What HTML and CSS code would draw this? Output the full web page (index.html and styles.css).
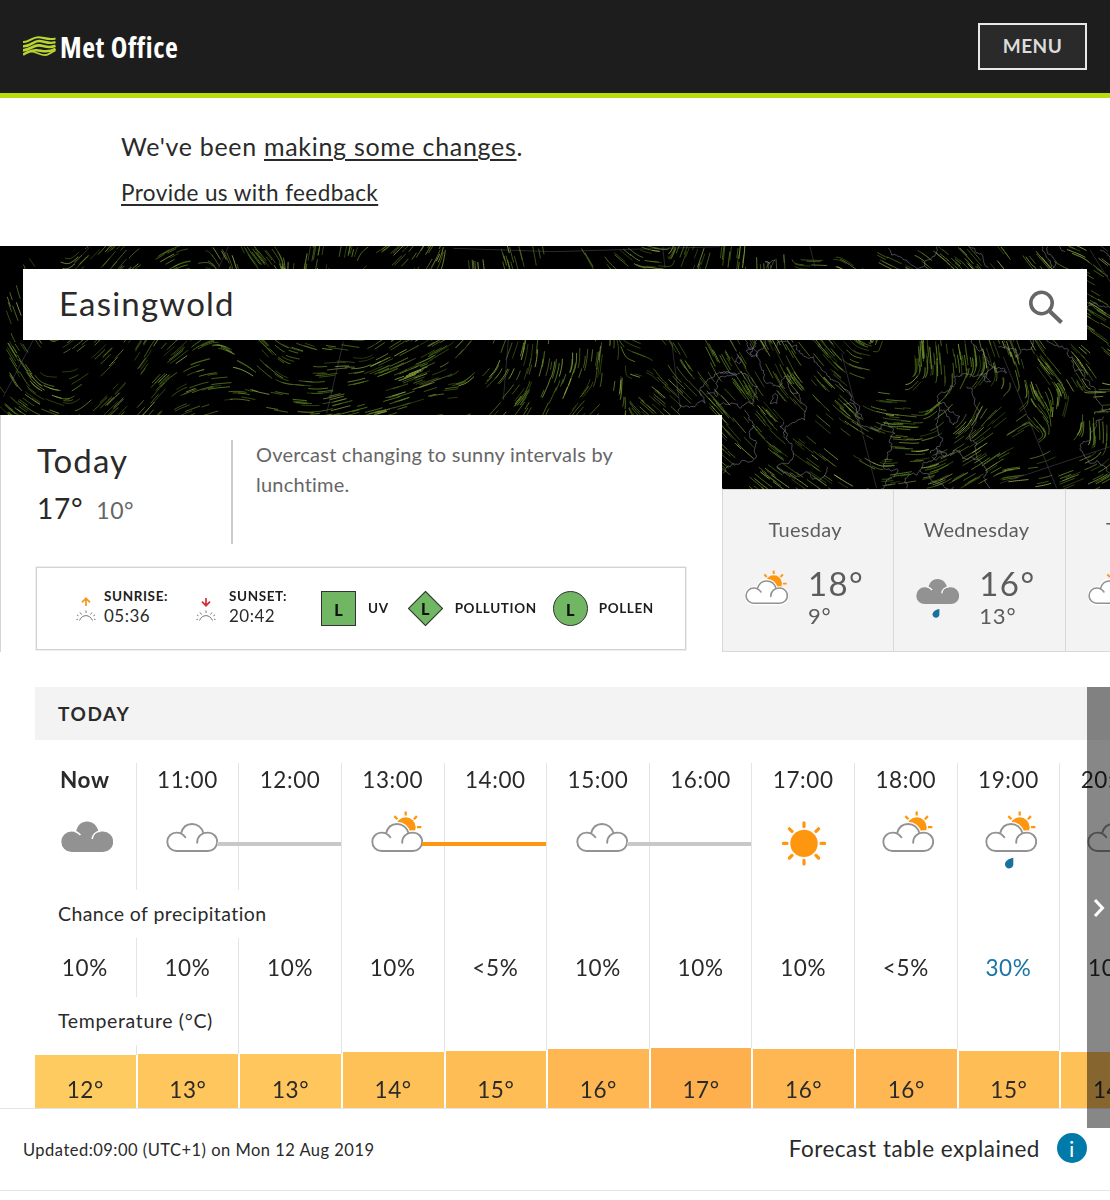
FILE: index.html
```html
<!DOCTYPE html>
<html lang="en">
<head>
<meta charset="utf-8">
<title>Easingwold weather - Met Office</title>
<link rel="stylesheet" href="styles.css">
</head>
<body>
<svg class="sprite" aria-hidden="true">
  <symbol id="cloud-outline" viewBox="0 0 52 60">
    <path fill="#fff" d="M10.5 40A9.2 9.2 0 0 1 10.5 21.6L15 22.6C16.5 16.5 20.5 13 26 13S36 16.5 37.5 22.3L42 21.6A9.2 9.2 0 0 1 42 40Z"/>
    <path fill="none" stroke="#929292" stroke-width="1.9" stroke-linecap="round" d="M19.3 26.3C17 23 14 21.6 10.5 21.6A9.2 9.2 0 0 0 10.5 40H42A9.2 9.2 0 0 0 42 21.6C35.5 21.6 31 25.5 31.2 31.8M15 22.6C16.5 16.5 20.5 13 26 13S36 16.5 37.5 22.3"/>
  </symbol>
  <symbol id="cloud-solid" viewBox="0 0 52 60">
    <path fill="#929292" d="M10.5 41A10.2 10.2 0 0 1 10.5 20.6L15 21C16.5 14 20.5 10.6 26 10.6S36 14 37.5 20.6L42 20.6A10.2 10.2 0 0 1 42 41Z"/>
    <path fill="none" stroke="#fff" stroke-width="1.5" d="M19.5 24C17 21.5 14.5 20.5 13.5 20.3M31.2 28C31.5 24 34.5 20.5 39.5 20.2"/>
  </symbol>
  <symbol id="sun-peek" viewBox="0 0 52 60">
    <circle cx="34.7" cy="16.2" r="10" fill="#ff960f"/>
    <path stroke="#ff960f" stroke-width="2.3" d="M34.7 4.6V.4M26.4 8.2L23.4 5.1M42.9 8.2L45.9 5.1M46 16.2H50.4"/>
    <path fill="#fff" stroke="#fff" stroke-width="4.6" d="M10.5 40A9.2 9.2 0 0 1 10.5 21.6L15 22.6C16.5 16.5 20.5 13 26 13S36 16.5 37.5 22.3L42 21.6A9.2 9.2 0 0 1 42 40Z"/>
    <use href="#cloud-outline" width="52" height="60"/>
  </symbol>
  <symbol id="drop" viewBox="0 0 52 60">
    <path fill="#1b719e" d="M28.3 46.8V53.3C28.3 56 26.4 57.4 24.3 57.4C21.8 57.4 20 55.6 20 53.2C20 50.2 23.5 47.6 28.3 46.8Z"/>
  </symbol>
  <symbol id="sun-full" viewBox="0 0 52 60">
    <circle cx="25" cy="32.4" r="13.7" fill="#ff960f"/>
    <path stroke="#ff960f" stroke-width="3.2" stroke-linecap="round" d="M25 15.400V11.800M25 49.400V53M8 32.400H4.400M42 32.400H45.600M13 20.400L10.400 17.800M37 20.400L39.600 17.800M13 44.400L10.400 47M37 44.400L39.600 47"/>
  </symbol>
  <symbol id="horizon" viewBox="0 0 20 12">
    <path fill="none" stroke="#777" stroke-width="1" d="M3.500 10.500C6 4 14 4 16.500 10.500M10 .5V3M4 2.500L5.500 4.500M16 2.500L14.500 4.500M1 5L2.500 5.800M19 5L17.500 5.800M.5 9.500L2 9.200M19.500 9.500L18 9.200"/>
  </symbol>
</svg>

<header class="topbar">
  <a class="logo">
    <svg width="33" height="21" viewBox="0 0 33 21" fill="none" stroke="#b9d532">
      <path stroke-width="2.100" d="M0 6C6 6.500 9 1.200 15 1.200S25 4.500 32.500 2.400"/>
      <path stroke-width="2.400" d="M0 10.200C8 10.700 10 4.800 16 5S25 8.400 32.500 6.200"/>
      <path stroke-width="2.600" d="M0 14.400C8 13.500 10 9 16 9.400S25 12.800 32.500 9.800"/>
      <path stroke-width="2.500" d="M0 18.800C4 15.500 8 14.600 13 14.200S23 18 32.500 12.800"/>
      <path stroke-width="1.700" d="M8 15.500C13 15.500 18 19.600 22 19.200S28 16 32.500 14.500"/>
    </svg>
    <span>Met Office</span>
  </a>
  <button class="menu">MENU</button>
</header>

<section class="notice">
  <p class="changes">We've been <a>making some changes</a>.</p>
  <p class="feedback"><a>Provide us with feedback</a></p>
</section>

<section class="hero">
  <canvas class="wind" id="wind" width="1110" height="244"></canvas>
  <div class="search">
    <span>Easingwold</span>
    <svg width="36" height="36" viewBox="0 0 36 36" fill="none" stroke="#666"><circle cx="14.500" cy="14" r="10.700" stroke-width="3.600"/><path stroke-width="4.200" d="M23 22.500L34.500 33.500"/></svg>
  </div>
  <div class="days">
    <article class="today">
      <div class="summary">
        <div class="headline">
          <h2>Today</h2>
          <p><span class="high">17°</span><span class="low">10°</span></p>
        </div>
        <p class="description">Overcast changing to sunny intervals by lunchtime.</p>
      </div>
      <div class="facts">
        <div class="sun rise">
          <svg width="20" height="26" viewBox="0 0 20 26"><path fill="none" stroke="#f39a1c" stroke-width="1.700" d="M10 10V2.500M6 6.300L10 2.300L14 6.300"/><use href="#horizon" y="14" width="20" height="12"/></svg>
          <p><b>SUNRISE:</b><span>05:36</span></p>
        </div>
        <div class="sun set">
          <svg width="20" height="26" viewBox="0 0 20 26"><path fill="none" stroke="#d13239" stroke-width="1.700" d="M10 2V9.500M6 5.700L10 9.700L14 5.700"/><use href="#horizon" y="14" width="20" height="12"/></svg>
          <p><b>SUNSET:</b><span>20:42</span></p>
        </div>
        <div class="level uv"><i class="badge square"><em>L</em></i><b>UV</b></div>
        <div class="level pollution"><i class="badge diamond"><em>L</em></i><b>POLLUTION</b></div>
        <div class="level pollen"><i class="badge circle"><em>L</em></i><b>POLLEN</b></div>
      </div>
    </article>
    <article class="day">
      <h3>Tuesday</h3>
      <div class="outlook">
        <svg width="43" height="50" viewBox="0 0 52 60"><use href="#sun-peek"/></svg>
        <p><span class="high">18°</span><span class="low">9°</span></p>
      </div>
    </article>
    <article class="day">
      <h3>Wednesday</h3>
      <div class="outlook">
        <svg width="43" height="50" viewBox="0 0 52 60"><use href="#cloud-solid"/><use href="#drop"/></svg>
        <p><span class="high">16°</span><span class="low">13°</span></p>
      </div>
    </article>
    <article class="day">
      <h3>Thursday</h3>
      <div class="outlook">
        <svg width="43" height="50" viewBox="0 0 52 60"><use href="#sun-peek"/></svg>
      </div>
    </article>
  </div>
</section>

<section class="forecast">
  <h2 class="table-title">TODAY</h2>
  <div class="hours">
    <h4 class="label precip">Chance of precipitation</h4>
    <h4 class="label temp">Temperature (°C)</h4>
    <div class="hour"><time class="now">Now</time><div class="icon"><svg><use href="#cloud-solid"/></svg></div><span class="chance">10%</span><div class="bar c12">12°</div></div>
    <div class="hour"><time>11:00</time><div class="icon linked"><svg><use href="#cloud-outline"/></svg><i class="link"></i></div><span class="chance">10%</span><div class="bar c13">13°</div></div>
    <div class="hour"><time>12:00</time><div class="icon tail"><i class="link"></i></div><span class="chance">10%</span><div class="bar c13">13°</div></div>
    <div class="hour"><time>13:00</time><div class="icon linked"><svg><use href="#sun-peek"/></svg><i class="link warm"></i></div><span class="chance">10%</span><div class="bar c14">14°</div></div>
    <div class="hour"><time>14:00</time><div class="icon tail"><i class="link warm"></i></div><span class="chance">&lt;5%</span><div class="bar c15">15°</div></div>
    <div class="hour"><time>15:00</time><div class="icon linked"><svg><use href="#cloud-outline"/></svg><i class="link"></i></div><span class="chance">10%</span><div class="bar c16">16°</div></div>
    <div class="hour"><time>16:00</time><div class="icon tail"><i class="link"></i></div><span class="chance">10%</span><div class="bar c17">17°</div></div>
    <div class="hour"><time>17:00</time><div class="icon"><svg><use href="#sun-full"/></svg></div><span class="chance">10%</span><div class="bar c16">16°</div></div>
    <div class="hour"><time>18:00</time><div class="icon"><svg><use href="#sun-peek"/></svg></div><span class="chance">&lt;5%</span><div class="bar c16">16°</div></div>
    <div class="hour"><time>19:00</time><div class="icon"><svg><use href="#sun-peek"/><use href="#drop"/></svg></div><span class="chance likely">30%</span><div class="bar c15">15°</div></div>
    <div class="hour"><time>20:00</time><div class="icon"><svg><use href="#cloud-outline"/></svg></div><span class="chance">10%</span><div class="bar c14">14°</div></div>
  </div>
  <button class="next" aria-label="Later hours"><svg width="14" height="20" viewBox="0 0 14 20"><path fill="none" stroke="#fff" stroke-width="3" d="M3 2L10.500 10L3 18"/></svg></button>
</section>

<footer class="status">
  <p class="updated">Updated:09:00 (UTC+1) on Mon 12 Aug 2019</p>
  <a class="explained">Forecast table explained <i>i</i></a>
</footer>
<script src="wind.js"></script>
</body>
</html>
```
FILE: styles.css
```css
* { box-sizing: border-box; margin: 0; padding: 0; }
body { width: 1110px; height: 1200px; overflow: hidden; background: #fff; color: #2a2a2a; font-family: Lato, "Open Sans", sans-serif; font-variant-ligatures: none; }
.sprite { position: absolute; width: 0; height: 0; }
i, em { font-style: normal; }

.topbar { display: flex; justify-content: space-between; align-items: center; height: 98px; padding: 0 23px; background: #1d1d1d; border-bottom: 5px solid #b9dc0c; }
.logo { display: flex; align-items: center; gap: 4px; color: #fff; font: 700 28px/40px "Open Sans", sans-serif; font-stretch: 75%; letter-spacing: .6px; }
.menu { width: 109px; height: 47px; border: 2px solid #e8e8e8; background: #2a2a2a; color: #dcdcdc; font: 700 19px/1 Lato, sans-serif; letter-spacing: .5px; padding-bottom: 3px; }

.notice { height: 148px; padding: 31px 121px 0; }
.notice a { text-decoration: underline; text-decoration-thickness: 1.500px; text-underline-offset: 3px; text-decoration-skip-ink: auto; }
.changes { font-size: 25px; line-height: 35px; letter-spacing: .7px; }
.feedback { font-size: 22.500px; line-height: 36px; letter-spacing: .4px; margin-top: 11px; }

.hero { position: relative; height: 406px; padding: 23px 0 0; }
.wind { position: absolute; left: 0; top: 0; }
.search { position: relative; display: flex; justify-content: space-between; margin: 0 23px; height: 71px; padding: 0 24px 0 36px; background: #fff; font-size: 33px; line-height: 68px; letter-spacing: 1.2px; }
.search svg { margin-top: 20px; }
.days { position: relative; display: flex; align-items: flex-end; width: 1110px; margin-top: 75px; overflow: hidden; }
.today { flex: none; width: 722px; height: 237px; padding: 25px 36px 0 35px; background: #fff; border-left: 1px solid #d5d5d5; }
.summary { display: flex; height: 104px; }
.headline { width: 197px; border-right: 2px solid #ccc; padding-left: 1px; }
.headline h2 { font-size: 33px; line-height: 41px; font-weight: 400; letter-spacing: 1.1px; }
.headline p { display: flex; align-items: baseline; gap: 13px; line-height: 54px; }
.headline .high { font-size: 28px; letter-spacing: .7px; }
.headline .low { font-size: 23px; letter-spacing: .6px; color: #666; }
.description { width: 400px; padding: 0 0 0 23px; margin-top: -1px; font-size: 20px; line-height: 30px; letter-spacing: .22px; color: #666; }
.facts { display: flex; align-items: center; height: 83px; margin-top: 23px; border: 1px solid #d3d3d3; font-size: 13.500px; line-height: 19px; box-shadow: 0 0 0 .5px #ddd; }
.facts b { font-weight: 700; letter-spacing: .62px; color: #1d1d1d; }
.sun { display: flex; align-items: center; gap: 8px; }
.sun p { display: flex; flex-direction: column; margin-top: -5px; }
.sun p span { font-size: 17px; letter-spacing: .5px; }
.rise { width: 120px; margin-left: 39px; }
.set { width: 125px; gap: 13px; }
.level { display: flex; align-items: center; gap: 12px; }
.badge { display: grid; place-items: center; width: 35px; height: 35px; background: #70b663; border: 1px solid #333; }
.badge em { font: 700 16px/20px "Open Sans", sans-serif; color: #111; padding-top: 2px; }
.diamond { width: 25px; height: 25px; margin: 0 5px; transform: rotate(45deg); }
.diamond em { transform: rotate(-45deg); padding-top: 0; }
.circle { border-radius: 50%; }
.pollution { margin-left: 19px; }
.pollen { margin-left: 16px; gap: 11px; }

.day { flex: none; width: 171.300px; height: 163px; background: #f3f3f3; border: solid #d8d8d8; border-width: 1px 0 1px 1px; color: #5c5c5c; }
.day h3 { margin-top: 23px; padding-right: 6px; font-size: 20px; line-height: 32px; font-weight: 400; text-align: center; letter-spacing: .3px; }
.outlook { display: flex; gap: 21px; padding-left: 22px; height: 70px; margin-top: 13px; }
.outlook svg { margin-top: 12px; flex: none; }
.outlook p { display: flex; flex-direction: column; }
.outlook .high { font-size: 33px; line-height: 50px; letter-spacing: 1.4px; margin-left: -1px; }
.outlook .low { font-size: 22px; line-height: 22px; letter-spacing: .8px; margin: -3px 0 0 -1px; }

.forecast { position: relative; padding: 35px 0 0 34px; height: 457px; border-bottom: 1px solid #e4e4e4; }
.table-title { margin-left: 1px; height: 53px; padding-left: 23px; background: #f3f3f3; font-size: 19px; line-height: 53px; font-weight: 700; letter-spacing: 1.600px; }
.hours { display: grid; grid-template-columns: repeat(11, 102.640px); grid-template-rows: 127px 48px 59px 48px 63px; width: 1076px; margin-top: 23px; overflow: hidden; }
.hour { grid-row: 1 / 6; display: grid; grid-template-rows: subgrid; grid-template-columns: 100%; border-right: 1px solid #e4e4e4; text-align: center; font-size: 22.500px; letter-spacing: .6px; }
.hour > * { grid-column: 1; }
.hour:nth-of-type(1) { grid-column: 1; }
.hour:nth-of-type(2) { grid-column: 2; }
.hour:nth-of-type(3) { grid-column: 3; }
.hour:nth-of-type(4) { grid-column: 4; }
.hour:nth-of-type(5) { grid-column: 5; }
.hour:nth-of-type(6) { grid-column: 6; }
.hour:nth-of-type(7) { grid-column: 7; }
.hour:nth-of-type(8) { grid-column: 8; }
.hour:nth-of-type(9) { grid-column: 9; }
.hour:nth-of-type(10) { grid-column: 10; }
.hour:nth-of-type(11) { grid-column: 11; }
.hour time { grid-row: 1; line-height: 34px; }
.hour .now { font-weight: 700; }
.icon { grid-row: 1; display: flex; margin-top: 48px; padding-left: 27px; height: 60px; }
.icon.linked { padding-left: 29px; }
.icon.tail { padding-left: 0; }
.icon svg { flex: none; width: 52px; height: 60px; overflow: visible; }
.link { flex: 1; height: 4px; margin: 30.500px -2px 0 -1px; background: #c8c8c8; position: relative; }
.tail .link { margin-left: 0; margin-right: 0; }
.link.warm { background: #ff960f; }
.chance { grid-row: 3; line-height: 60px; }
.likely { color: #1b74a5; }
.label { z-index: 1; background: #fff; padding-left: 24px; font-size: 19.500px; line-height: 47px; font-weight: 400; letter-spacing: .42px; white-space: nowrap; }
.precip { grid-area: 2 / 1 / 3 / 4; margin-right: 2px; }
.temp { grid-area: 4 / 1 / 5 / 3; margin-right: 2px; letter-spacing: .65px; }
.bar { grid-row: 5; align-self: end; margin: 0 -1px 0 0; border: solid #fff; border-width: 0 1px 0 1px; line-height: 37px; display: flex; align-items: flex-end; justify-content: center; }
.c12 { height: 53px; background: #fecb60; }
.c13 { height: 54px; background: #fec65c; }
.c14 { height: 56px; background: #fec158; }
.c15 { height: 57px; background: #febd55; }
.c16 { height: 59px; background: #feb753; }
.c17 { height: 60px; background: #feb04f; }
.next { position: absolute; z-index: 2; right: 0; top: 35px; width: 23px; height: 441px; border: 0; background: rgba(0, 0, 0, .47); display: grid; place-items: center; }

.status { display: flex; justify-content: space-between; align-items: center; height: 82px; padding: 0 23px; border-bottom: 1px solid #e4e4e4; }
.updated { font-size: 16.500px; letter-spacing: .48px; }
.explained { display: flex; align-items: center; gap: 17px; font-size: 22.500px; letter-spacing: .52px; margin-top: -3px; }
.explained i { width: 30px; height: 30px; border-radius: 50%; background: #007aa9; color: #fff; text-align: center; font: 400 22px/31px Lato, sans-serif; }
```
FILE: wind.js
```
(function () {
  var ctx = document.getElementById('wind').getContext('2d');
  var W = 1110, H = 244, seed = 20190812;
  function rnd() { seed = (seed * 1664525 + 1013904223) % 4294967296; return seed / 4294967296; }

  // Wind direction samples: x, y, bearing in degrees (clockwise from east).
  var F = [15,10,65,13,30,75,15,75,70,8,115,60,20,130,60,30,150,35,50,160,20,50,5,20,90,15,-45,110,10,-50,160,15,-30,200,10,-10,215,8,60,240,15,75,255,10,50,310,15,-80,345,15,-80,
    25,115,55,60,125,0,80,110,-40,80,140,-35,110,110,-45,130,120,-55,100,150,-45,145,100,-60,180,100,-45,180,115,-35,160,150,-50,200,120,-15,220,130,-5,190,155,-20,240,105,30,270,120,40,265,110,50,300,95,20,300,115,10,300,140,5,270,155,10,330,130,-8,340,155,-15,350,105,10,
    375,15,-30,400,15,-45,420,15,-60,465,15,85,510,15,75,540,15,80,590,15,60,625,15,40,650,22,5,690,15,-70,735,15,-85,380,100,-35,380,120,-25,380,140,-15,440,105,-30,430,130,-20,450,150,-5,460,110,-50,485,140,-45,505,110,-70,510,150,-50,540,105,-85,535,130,-75,545,150,-65,570,110,88,575,130,-70,605,130,-85,590,155,-45,615,120,-80,640,110,20,640,125,15,660,120,60,665,145,40,680,110,60,690,140,45,705,115,65,730,150,45,
    740,15,-80,757,10,85,825,5,0,855,15,35,900,10,25,940,15,40,985,10,50,1020,10,55,1040,20,50,1070,10,20,1095,15,40,1095,35,30,1100,80,30,740,120,60,750,140,60,760,160,50,730,165,50,730,225,40,780,120,65,790,150,50,810,130,50,800,180,40,820,100,50,850,150,45,840,200,40,790,220,35,845,105,50,860,112,10,890,95,-70,870,140,10,895,145,5,910,165,8,900,180,5,870,190,30,860,215,30,905,205,5,930,195,-15,900,225,-10,940,165,-40,920,145,-50,925,110,85,950,125,85,960,110,80,965,160,-70,975,140,-50,960,220,-30,945,185,-40,1000,105,70,1020,125,75,1050,120,50,1080,130,60,1060,170,-75,1090,180,85,1040,170,50,1070,190,-50,1020,190,-30,990,210,-35,1020,225,-5,1070,215,-20,1095,100,40,1095,155,-5,1010,160,-40];
  // Calm areas: x, y, radius.
  var calm = [55, 112, 24, 90, 128, 12, 260, 160, 14, 330, 20, 16, 470, 155, 22, 600, 160, 14, 645, 105, 16, 690, 165, 16, 745, 205, 26, 820, 15, 22, 870, 125, 18, 1000, 150, 22, 1040, 205, 30, 780, 165, 14, 895, 110, 14, 1070, 150, 14];

  function angle(x, y) {
    var c = 0, s = 0;
    for (var i = 0; i < F.length; i += 3) {
      var dx = x - F[i], dy = y - F[i + 1], w = 1 / Math.pow(dx * dx + dy * dy + 120, 2), a = F[i + 2] * Math.PI / 90;
      c += w * Math.cos(a); s += w * Math.sin(a);
    }
    return Math.atan2(s, c) / 2;
  }
  function isCalm(x, y) {
    for (var i = 0; i < calm.length; i += 3) {
      if (Math.hypot(x - calm[i], y - calm[i + 1]) < calm[i + 2] && rnd() < 0.85) return true;
    }
    return false;
  }

  ctx.fillStyle = '#000';
  ctx.fillRect(0, 0, W, H);
  ctx.lineWidth = 1;
  for (var n = 0; n < 1050; n++) {
    var cx = rnd() * W, cy = rnd() * H;
    if (isCalm(cx, cy)) continue;
    // Streaks run in small bundles of neighbours.
    for (var k = 0; k < 3; k++) {
      var x = cx + (rnd() - .5) * 15, y = cy + (rnd() - .5) * 15;
      var len = 7 + rnd() * 15, prev = angle(x, y);
      ctx.beginPath();
      ctx.moveTo(x, y);
      for (var t = 0; t < len; t += 2) {
        var a = angle(x, y);
        if (Math.cos(a - prev) < 0) a += Math.PI;
        x += Math.cos(a) * 2; y += Math.sin(a) * 2; prev = a;
        ctx.lineTo(x, y);
      }
      var b = 0.45 + rnd() * 0.5;
      ctx.strokeStyle = 'rgba(' + (rnd() < 0.25 ? '140,165,65,' : '88,125,30,') + b + ')';
      ctx.stroke();
    }
  }

  // Coastlines and graticule, in a grid three times finer than the canvas, offset to the east.
  ctx.translate(720, -6);
  ctx.scale(1 / 3, 1 / 3);
  function wobble(x1, y1, x2, y2, d) {
    var l = Math.hypot(x2 - x1, y2 - y1);
    if (l < 7) { ctx.lineTo(x2, y2); return; }
    var mx = (x1 + x2) / 2 + (rnd() - .5) * l * d, my = (y1 + y2) / 2 + (rnd() - .5) * l * d;
    wobble(x1, y1, mx, my, d); wobble(mx, my, x2, y2, d);
  }
  var coasts = [
    [505,25,515,45,555,60,575,75,610,80,635,55,650,20],[750,20,770,40,790,65,805,82],[968,20,978,50,990,85],[982,20,996,50,1000,85],[1100,205,1130,190,1170,205],[1020,15,1035,35],[1140,30,1170,60],
    [0,400,40,405,75,400,95,430,110,460,100,490,60,505,0,495],[75,510,100,560,105,640,95,665,60,670,10,700],
    [110,300,90,340,120,370,130,400,140,430,180,440,210,410,205,440,240,480,260,500,255,540,190,580,215,610,220,640,170,680,190,700,260,695,300,720,320,680],
    [135,300,120,330,110,350,85,325,75,300],[190,545,180,560,200,600],[165,460,150,490,170,490,165,460],
    [170,320,230,315,280,350,320,400,350,425,390,460,420,500,440,560,500,545,525,580,515,630,490,680,535,690,500,720,440,745],[370,495,400,490,430,535],
    [560,745,555,715,600,690,650,640,655,580,658,490,700,440,775,405,800,400,860,398],[740,440,760,470,775,520,750,580,770,650,800,690,810,745],
    [650,635,710,630,770,660],[630,640,650,625,680,640,650,660,635,650],[660,510,700,555,720,530,680,500,660,490],[755,300,770,325,800,360,820,380,860,398],[785,400,800,425,812,425,800,400],[835,320,880,325,890,350,920,330,940,300],
    [980,300,1010,315,1040,325,1060,370,1100,420,1130,480,1165,520],[1150,530,1110,600,1080,630,1110,670,1170,700],[600,690,630,715,670,735,700,740],
    [140,85,150,70,135,65,165,60,150,85],[50,340,60,370,45,365,55,345],[90,310,100,325,80,330,100,350],
    [-125,515,-120,495,-80,500,-45,490,-60,450,-30,415,10,395,50,405,-10,470,-40,460]
  ];
  ctx.lineJoin = 'round';
  ctx.lineWidth = 2.4;
  ctx.strokeStyle = 'rgba(140,140,155,.65)';
  coasts.forEach(function (p) {
    ctx.beginPath();
    ctx.moveTo(p[0], p[1]);
    for (var i = 2; i < p.length; i += 2) wobble(p[i - 2], p[i - 1], p[i], p[i + 1], .55);
    ctx.stroke();
  });
  ctx.strokeStyle = 'rgba(95,95,110,.55)';
  [[270,20,285,80],[365,340,470,745],[850,350,1010,745],[840,730,1170,620],[1110,30,1170,125],[-145,305,-120,500],[-650,480,-635,300],[-1130,305,-1180,520],[-2060,300,-2150,470],[-1890,20,-1950,85],[-1475,20,-1505,85],[-800,25,-500,35],[-500,35,0,20],[-172,20,-165,85]].forEach(function (p) {
    ctx.beginPath(); ctx.moveTo(p[0], p[1]); ctx.lineTo(p[2], p[3]); ctx.stroke();
  });
})();
```
